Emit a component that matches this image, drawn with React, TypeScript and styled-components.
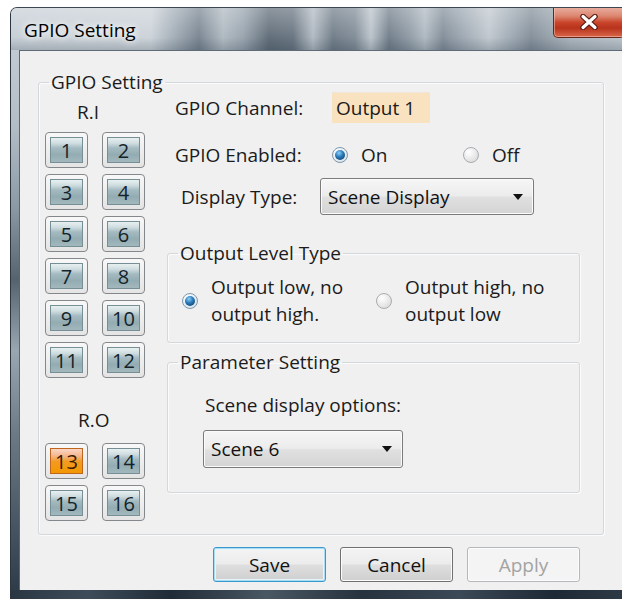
import styled, { createGlobalStyle, css } from 'styled-components';

const GlobalStyle = createGlobalStyle`
  html, body {
    margin: 0;
    padding: 0;
    background: #fff;
  }
  body {
    font-family: "Open Sans", "Liberation Sans", sans-serif;
    font-size: 19px;
    color: #1b1b1b;
  }
  * {
    box-sizing: border-box;
  }
`;

const Screen = styled.div`
  width: 622px;
  height: 599px;
  overflow: hidden;
  padding: 7px 0 0 10px;
`;

const Window = styled.div`
  width: 640px;
  height: 592px;
  display: flex;
  flex-direction: column;
  border-top: 1px solid #3a4653;
  border-left: 1px solid #2b3641;
  border-radius: 7px 0 0 0;
  overflow: hidden;
  background: linear-gradient(
    to bottom,
    #c9d1d8 0%,
    #b3bdc6 20%,
    #8b98a4 34%,
    #56636f 46%,
    #9aa6b0 58%,
    #6d7a86 72%,
    #4b5966 86%,
    #2b3845 100%
  );
`;

// Aero glass caption: blurred desktop showing through
const TitleBar = styled.div`
  height: 42px;
  flex: none;
  display: flex;
  align-items: flex-start;
  background:
    linear-gradient(to bottom, rgba(255, 255, 255, 0.3), rgba(255, 255, 255, 0.04) 70%, rgba(40, 55, 70, 0.22)),
    linear-gradient(
      to right,
      #c6ced5 0px,
      #cbd2d8 140px,
      #9ea9b3 165px,
      #76838f 188px,
      #aeb8c0 212px,
      #96a2ac 232px,
      #5d6a76 258px,
      #65727e 282px,
      #b0b9c1 302px,
      #6d7a86 322px,
      #7e8a95 344px,
      #bac3ca 360px,
      #6f7c88 378px,
      #8c98a3 398px,
      #aeb8c0 414px,
      #808c97 432px,
      #9ca7b1 452px,
      #bfc7ce 478px,
      #9ea9b3 500px,
      #818d98 520px,
      #aab4bc 560px,
      #c4ccd2 640px
    );
`;

const Title = styled.span`
  padding: 9px 0 0 13px;
  font-size: 19px;
  line-height: 26px;
  color: #000;
  text-shadow: 0 0 6px rgba(255, 255, 255, 0.95), 0 0 10px rgba(255, 255, 255, 0.85);
`;

const CloseButton = styled.div`
  margin: -1px 25px 0 auto;
  width: 72px;
  height: 31px;
  display: flex;
  align-items: center;
  justify-content: center;
  border: 1px solid #6b2418;
  border-top: none;
  border-radius: 0 0 5px 5px;
  background: linear-gradient(
    to bottom,
    #eab1a2 0%,
    #dc8670 30%,
    #c8442a 52%,
    #b9331c 70%,
    #d8674a 100%
  );
  box-shadow: inset 0 0 0 1px rgba(255, 220, 210, 0.45);
`;

const Client = styled.div`
  margin-left: 8px;
  height: 540px;
  flex: none;
  border-top: 1px solid #5f6c78;
  border-left: 1px solid #5a6773;
  background: #f0f0f0;
  display: flex;
  flex-direction: column;
`;

const BottomFrame = styled.div`
  flex: 1;
  background: linear-gradient(
    to right,
    #2a3743 0%,
    #3e4c59 12%,
    #1f2b37 25%,
    #4a5864 40%,
    #26323e 55%,
    #3c4956 70%,
    #1d2935 85%,
    #34414d 100%
  );
`;

const GroupBox = styled.fieldset<{ $w: number; $h: number }>`
  margin: 0;
  padding: 0;
  width: ${(p) => p.$w}px;
  height: ${(p) => p.$h}px;
  min-width: 0;
  border: 1px solid #d3d8dc;
  border-radius: 3px;
  box-shadow: inset 1px 1px 0 #fbfbfb, 1px 1px 0 #fbfbfb;
`;

const GroupTitle = styled.legend`
  margin-left: 10px;
  padding: 0 2px;
  font-size: 19px;
  line-height: 18px;
  color: #1b1b1b;
`;

const MainGroup = styled(GroupBox)`
  margin: 22px 0 0 18px;
`;

const MainBody = styled.div`
  display: flex;
`;

const PortColumn = styled.div`
  padding-left: 6px;
  display: flex;
  flex-direction: column;
`;

const PortLabel = styled.div<{ $top: number; $left: number }>`
  margin-top: ${(p) => p.$top}px;
  margin-left: ${(p) => p.$left}px;
  line-height: 24px;
`;

const PortGrid = styled.div<{ $top: number }>`
  margin-top: ${(p) => p.$top}px;
  display: grid;
  grid-template-columns: 43px 43px;
  grid-auto-rows: 36px;
  column-gap: 14px;
  row-gap: 6px;
`;

const PortFrame = styled.div`
  border: 1px solid #85888a;
  border-radius: 4px;
  background: linear-gradient(to bottom, #f8f8f8, #e4e4e4);
  padding: 4px;
  display: flex;
`;

const PortFace = styled.div<{ $active?: boolean }>`
  flex: 1;
  display: flex;
  align-items: center;
  justify-content: center;
  font-size: 20px;
  color: #14232a;
  border: 1px solid #768f96;
  background: linear-gradient(to bottom, #e8f0f1 0%, #cfdde0 22%, #a3bac0 42%, #93acb2 70%, #a2b8bd 100%);
  ${(p) =>
    p.$active &&
    css`
      color: #3a1a00;
      border-color: #c0661c;
      background: linear-gradient(to bottom, #fad6c6 0%, #f6b790 28%, #f39a22 52%, #f39700 100%);
    `}
`;

const FormColumn = styled.div`
  margin-left: 22px;
  display: flex;
  flex-direction: column;
`;

const FormRow = styled.div<{ $top: number; $h: number }>`
  margin-top: ${(p) => p.$top}px;
  height: ${(p) => p.$h}px;
  display: flex;
  align-items: center;
`;

const FieldLabel = styled.span<{ $left: number; $w: number }>`
  margin-left: ${(p) => p.$left}px;
  width: ${(p) => p.$w}px;
  flex: none;
`;

const ValueBox = styled.div`
  width: 98px;
  height: 31px;
  padding-left: 4px;
  display: flex;
  align-items: center;
  background: #f9e2c0;
  border-top: 1px solid #efe5d8;
`;

const RadioOption = styled.label<{ $w?: number }>`
  width: ${(p) => (p.$w ? `${p.$w}px` : 'auto')};
  display: flex;
  align-items: center;
  gap: 13px;
  flex: none;
`;

const RadioDot = styled.span<{ $checked?: boolean }>`
  width: 16px;
  height: 16px;
  flex: none;
  border-radius: 50%;
  border: 1px solid #a9adb0;
  background: radial-gradient(circle at 35% 30%, #ffffff 0%, #ececec 45%, #d3d3d3 100%);
  display: flex;
  align-items: center;
  justify-content: center;
  ${(p) =>
    p.$checked &&
    css`
      border-color: #7f98ae;
      background: radial-gradient(circle at 35% 30%, #ffffff 0%, #e4ecf2 60%, #c7d3dc 100%);
      &::after {
        content: '';
        width: 10px;
        height: 10px;
        border-radius: 50%;
        background: radial-gradient(circle at 40% 30%, #8fd0f5 0%, #2f7fbf 40%, #14507f 75%, #0b3a60 100%);
      }
    `}
`;

const Combo = styled.div<{ $w: number; $h: number; $left?: number; $top?: number }>`
  width: ${(p) => p.$w}px;
  height: ${(p) => p.$h}px;
  margin-left: ${(p) => p.$left ?? 0}px;
  margin-top: ${(p) => p.$top ?? 0}px;
  padding: 0 10px 0 7px;
  display: flex;
  align-items: center;
  justify-content: space-between;
  border: 1px solid #7b7b7b;
  border-radius: 3px;
  background: linear-gradient(to bottom, #f6f6f6 0%, #ececec 48%, #e0e0e0 52%, #d4d4d4 100%);
  box-shadow: inset 0 0 0 1px #fbfbfb;
  color: #111;
`;

const Caret = styled.span`
  width: 0;
  height: 0;
  border-left: 5px solid transparent;
  border-right: 5px solid transparent;
  border-top: 6px solid #111;
`;

const SubGroup = styled(GroupBox)<{ $top: number }>`
  margin-top: ${(p) => p.$top}px;
`;

const LevelOptions = styled.div`
  padding: 12px 0 0 14px;
  display: flex;
  align-items: center;
`;

const TwoLine = styled.span`
  line-height: 27px;
`;

const OptionsText = styled.div`
  margin: 21px 0 0 37px;
  line-height: 26px;
`;

const ButtonRow = styled.div`
  margin-top: 12px;
  padding-left: 193px;
  display: flex;
  gap: 14px;
`;

const DialogButton = styled.button<{ $variant?: 'default' | 'disabled' }>`
  width: 113px;
  height: 35px;
  font-family: inherit;
  font-size: 19px;
  color: #111;
  border: 1px solid #707070;
  border-radius: 3px;
  background: linear-gradient(to bottom, #f4f4f4 0%, #ececec 48%, #dedede 52%, #cfcfcf 100%);
  box-shadow: inset 0 0 0 1px #fcfcfc;
  padding: 0;
  ${(p) =>
    p.$variant === 'default' &&
    css`
      border-color: #3a98cf;
      box-shadow: inset 0 0 0 1px #a9dcf3, inset 0 0 0 2px #e6f5fc;
    `}
  ${(p) =>
    p.$variant === 'disabled' &&
    css`
      color: #a3a3a3;
      border-color: #b5b8ba;
      background: #f4f4f4;
    `}
`;

const inputPorts = Array.from({ length: 12 }, (_, i) => i + 1);
const outputPorts = [13, 14, 15, 16];

export default function App() {
  return (
    <Screen>
      <GlobalStyle />
      <Window>
        <TitleBar>
          <Title>GPIO Setting</Title>
          <CloseButton>
            <svg width="20" height="16" viewBox="0 0 20 16">
              <path d="M4 2.5 L16 13.5 M16 2.5 L4 13.5" stroke="#5a1c12" strokeWidth="5.5" strokeLinecap="round" />
              <path d="M4 2.5 L16 13.5 M16 2.5 L4 13.5" stroke="#ffffff" strokeWidth="3.2" strokeLinecap="round" />
            </svg>
          </CloseButton>
        </TitleBar>
        <Client>
          <MainGroup $w={566} $h={462}>
            <GroupTitle>GPIO Setting</GroupTitle>
            <MainBody>
              <PortColumn>
                <PortLabel $top={9} $left={32}>R.I</PortLabel>
                <PortGrid $top={8}>
                  {inputPorts.map((n) => (
                    <PortFrame key={n}>
                      <PortFace>{n}</PortFace>
                    </PortFrame>
                  ))}
                </PortGrid>
                <PortLabel $top={30} $left={33}>R.O</PortLabel>
                <PortGrid $top={11}>
                  {outputPorts.map((n) => (
                    <PortFrame key={n}>
                      <PortFace $active={n === 13}>{n}</PortFace>
                    </PortFrame>
                  ))}
                </PortGrid>
              </PortColumn>

              <FormColumn>
                <FormRow $top={1} $h={31}>
                  <FieldLabel $left={8} $w={157}>GPIO Channel:</FieldLabel>
                  <ValueBox>Output 1</ValueBox>
                </FormRow>
                <FormRow $top={16} $h={31}>
                  <FieldLabel $left={8} $w={157}>GPIO Enabled:</FieldLabel>
                  <RadioOption $w={131}>
                    <RadioDot $checked />
                    On
                  </RadioOption>
                  <RadioOption>
                    <RadioDot />
                    Off
                  </RadioOption>
                </FormRow>
                <FormRow $top={8} $h={37}>
                  <FieldLabel $left={14} $w={139}>Display Type:</FieldLabel>
                  <Combo $w={214} $h={37}>
                    Scene Display
                    <Caret />
                  </Combo>
                </FormRow>

                <SubGroup $w={413} $h={99} $top={29}>
                  <GroupTitle>Output Level Type</GroupTitle>
                  <LevelOptions>
                    <RadioOption $w={194}>
                      <RadioDot $checked />
                      <TwoLine>
                        Output low, no
                        <br />
                        output high.
                      </TwoLine>
                    </RadioOption>
                    <RadioOption>
                      <RadioDot />
                      <TwoLine>
                        Output high, no
                        <br />
                        output low
                      </TwoLine>
                    </RadioOption>
                  </LevelOptions>
                </SubGroup>

                <SubGroup $w={413} $h={140} $top={10}>
                  <GroupTitle>Parameter Setting</GroupTitle>
                  <OptionsText>Scene display options:</OptionsText>
                  <Combo $w={200} $h={38} $left={35} $top={12}>
                    Scene 6
                    <Caret />
                  </Combo>
                </SubGroup>
              </FormColumn>
            </MainBody>
          </MainGroup>

          <ButtonRow>
            <DialogButton $variant="default">Save</DialogButton>
            <DialogButton>Cancel</DialogButton>
            <DialogButton $variant="disabled">Apply</DialogButton>
          </ButtonRow>
        </Client>
        <BottomFrame />
      </Window>
    </Screen>
  );
}
